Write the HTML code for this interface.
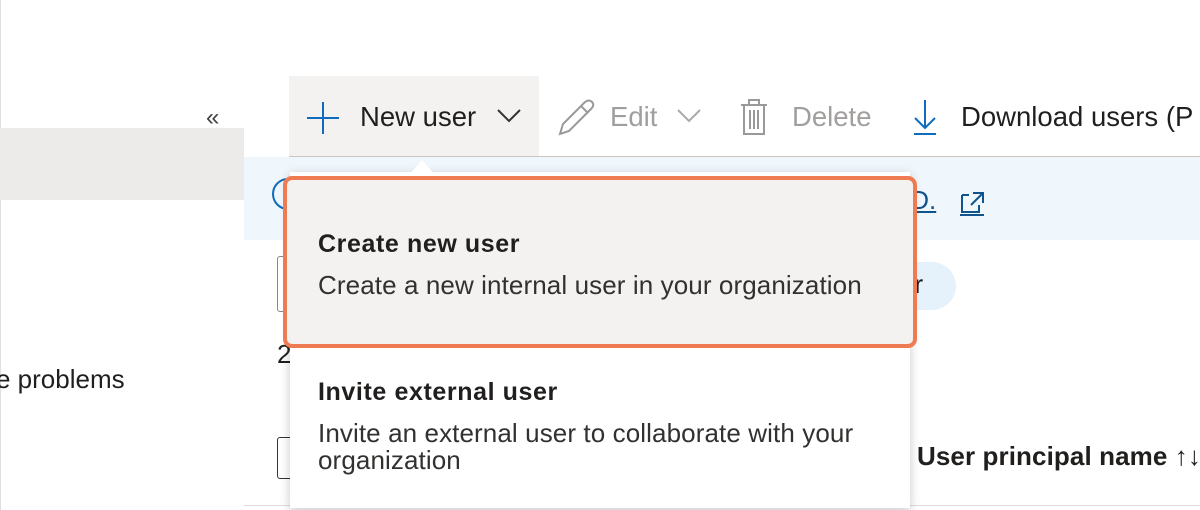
<!DOCTYPE html>
<html><head><meta charset="utf-8"><style>
body{margin:0;width:1200px;height:510px;overflow:hidden;background:#fff;font-family:"Segoe UI","Liberation Sans",sans-serif;color:#201f1e;position:relative}
.a{position:absolute;white-space:nowrap}
</style></head><body>
<div class="a" style="left:0;top:0;width:1px;height:510px;background:#e1dfdd"></div>
<div class="a" style="left:0;top:128px;width:244px;height:72px;background:#edebe9"></div>
<div class="a" style="left:206px;top:104px;font-size:24px;color:#444">«</div>
<div class="a" style="left:-4px;top:364px;font-size:26px">e problems</div>
<!-- toolbar -->
<div class="a" style="left:289px;top:76px;width:250px;height:80px;background:#f3f2f1"></div>
<div class="a" style="left:289px;top:156px;width:911px;height:1px;background:#c8c6c4"></div>
<svg class="a" style="left:305px;top:100px" width="36" height="36"><path d="M18 2V34M2 18H34" stroke="#0f6cbd" stroke-width="2"/></svg>
<div class="a" style="left:360px;top:101px;font-size:27.5px">New user</div>
<svg class="a" style="left:496px;top:106px" width="28" height="20"><path d="M2 4L13 15L24 4" stroke="#333" stroke-width="2" fill="none"/></svg>
<svg class="a" style="left:556px;top:96px" width="40" height="42"><path d="M4 38L7 28L29 6Q33 3 36 6Q39 9 35 13L13 35Z M25 10L32 17" stroke="#999" stroke-width="2" fill="none"/></svg>
<div class="a" style="left:610px;top:101px;font-size:27.5px;color:#a19f9d">Edit</div>
<svg class="a" style="left:676px;top:106px" width="28" height="20"><path d="M2 4L13 15L24 4" stroke="#aaa" stroke-width="2" fill="none"/></svg>
<svg class="a" style="left:738px;top:96px" width="32" height="42"><path d="M3 9H29M11 9V4H21V9M6 9V38H26V9M12 14V33M16 14V33M20 14V33" stroke="#999" stroke-width="2" fill="none"/></svg>
<div class="a" style="left:792px;top:101px;font-size:27.5px;color:#a19f9d">Delete</div>
<svg class="a" style="left:910px;top:98px" width="30" height="38"><path d="M15 2V30M5 20L15 30L25 20M4 36H26" stroke="#0f6cbd" stroke-width="2" fill="none"/></svg>
<div class="a" style="left:961px;top:101px;font-size:27.5px">Download users (P</div>
<!-- info bar -->
<div class="a" style="left:244px;top:157px;width:956px;height:83px;background:#eff6fc"></div>
<div class="a" style="left:272px;top:178px;width:28px;height:28px;border:2px solid #0f6cbd;border-radius:50%"></div>
<div class="a" style="left:903px;top:185px;font-size:26px;color:#0f548c;text-decoration:underline">ID.</div>
<svg class="a" style="left:958px;top:190px" width="28" height="26"><path d="M4 5H11M4 5V22H21V15M15 3H25V13M25 3L13 15" stroke="#0f548c" stroke-width="2" fill="none"/><path d="M2 25H26" stroke="#0f548c" stroke-width="2"/></svg>
<div class="a" style="left:880px;top:262px;width:76px;height:48px;background:#e6f2fb;border-radius:24px"></div>
<div class="a" style="left:900px;top:269px;font-size:26px">er</div>
<div class="a" style="left:277px;top:256px;width:14px;height:54px;border:1px solid #888;border-radius:3px"></div>
<div class="a" style="left:277px;top:339px;font-size:26px">2</div>
<div class="a" style="left:277px;top:437px;width:14px;height:40px;border:1px solid #333;border-radius:3px"></div>
<div class="a" style="left:917px;top:441px;font-size:26px;font-weight:600;letter-spacing:0.1px">User principal name ↑↓</div>
<div class="a" style="left:244px;top:505px;width:956px;height:1px;background:#e1dfdd"></div>
<!-- dropdown -->
<div class="a" style="left:290px;top:172px;width:620px;height:336px;background:#fff;box-shadow:0 3px 10px rgba(0,0,0,.22)"></div>
<div class="a" style="left:408px;top:160px;width:0;height:0;border-left:14px solid transparent;border-right:14px solid transparent;border-bottom:16px solid #fff"></div>
<div class="a" style="left:283px;top:176px;width:626px;height:164px;background:#f3f2f1;border:4px solid #ee7b52;border-radius:9px"></div>
<div class="a" style="left:318px;top:230px;font-size:25px;font-weight:600;letter-spacing:0.6px">Create new user</div>
<div class="a" style="left:318px;top:270px;font-size:26px;color:#323130;letter-spacing:0.1px">Create a new internal user in your organization</div>
<div class="a" style="left:318px;top:378px;font-size:25px;font-weight:600;letter-spacing:0.6px">Invite external user</div>
<div class="a" style="left:318px;top:420px;font-size:26px;color:#323130;line-height:27px;white-space:normal;width:580px;letter-spacing:0.1px">Invite an external user to collaborate with your organization</div>
</body></html>
